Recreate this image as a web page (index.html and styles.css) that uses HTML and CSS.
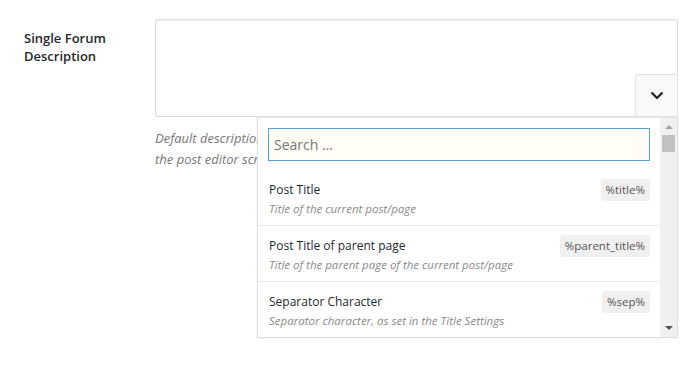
FILE: index.html
```html
<!DOCTYPE html>
<html lang="en">
<head>
    <meta charset="UTF-8">
    <meta name="viewport" content="width=device-width, initial-scale=1.0">
    <title>Single Forum Description</title>
    <link rel="stylesheet" href="styles.css">
</head>
<body>
    <div class="form-row">
        <div class="field-label">Single Forum Description</div>

        <div class="field">
            <div class="editor-wrap">
                <textarea class="editor"></textarea>

                <button class="toggle" type="button" aria-label="Insert variable">
                    <svg width="14" height="9" viewBox="0 0 14 9">
                        <polyline points="1.5,1.5 7,7 12.5,1.5" fill="none" stroke="#1d2327" stroke-width="2.2"/>
                    </svg>
                </button>

                <!-- variables dropdown, opened over the help text -->
                <div class="dropdown">
                    <div class="dropdown-list">
                        <div class="search-box">
                            <input class="search" type="text" placeholder="Search ...">
                        </div>

                        <div class="item">
                            <div class="item-text">
                                <div class="item-title">Post Title</div>
                                <div class="item-desc">Title of the current post/page</div>
                            </div>
                            <span class="tag">%title%</span>
                        </div>

                        <div class="item">
                            <div class="item-text">
                                <div class="item-title">Post Title of parent page</div>
                                <div class="item-desc">Title of the parent page of the current post/page</div>
                            </div>
                            <span class="tag">%parent_title%</span>
                        </div>

                        <div class="item">
                            <div class="item-text">
                                <div class="item-title">Separator Character</div>
                                <div class="item-desc">Separator character, as set in the Title Settings</div>
                            </div>
                            <span class="tag">%sep%</span>
                        </div>
                    </div>

                    <div class="scrollbar">
                        <span class="arrow arrow-up"></span>
                        <span class="thumb"></span>
                        <span class="track"></span>
                        <span class="arrow arrow-down"></span>
                    </div>
                </div>
            </div>

            <p class="help">Default description for single forum pages, used when no excerpt is given in<br>the post editor screen of the forum.</p>
        </div>
    </div>
</body>
</html>
```

FILE: styles.css
```css
html,
body {
    min-height: 365px;
}

body {
    margin: 0;
    background: #fff;
    font-family: 'Open Sans', 'Noto Sans', sans-serif;
    color: #23282d;
}

.form-row {
    display: grid;
    grid-template-columns: 131px 523px;
    padding: 19px 0 0 24px;
}

.field-label {
    padding-top: 10px;
    font-size: 13px;
    font-weight: 600;
    line-height: 18px;
    width: 100px;
}

.editor-wrap {
    position: relative;
}

.editor {
    display: block;
    box-sizing: border-box;
    width: 100%;
    height: 98px;
    margin: 0;
    border: 1px solid #dedede;
    border-radius: 2px;
    box-shadow: inset 0 1px 2px rgba(0, 0, 0, 0.06);
    background: #fff;
    resize: none;
}

.toggle {
    position: absolute;
    right: 0;
    bottom: 0;
    width: 43px;
    height: 43px;
    padding: 0;
    border: 1px solid #e2e2e2;
    border-radius: 2px 0 0 0;
    background: #f9f9f9;
    display: flex;
    align-items: center;
    justify-content: center;
    cursor: pointer;
}

.dropdown {
    position: absolute;
    top: 98px;
    left: 102px;
    width: 421px;
    height: 221px;
    box-sizing: border-box;
    display: flex;
    background: #fff;
    border: 1px solid #dedede;
    border-top-color: #e6e6e6;
    box-shadow: 0 1px 2px rgba(0, 0, 0, 0.05);
    z-index: 2;
}

.dropdown-list {
    flex: 1;
    overflow: hidden;
}

.search-box {
    padding: 10px 10px 9px;
}

.search {
    display: block;
    box-sizing: border-box;
    width: 100%;
    height: 33px;
    margin: 0;
    padding: 0 5px;
    border: 1px solid #5b9dd9;
    background: #fffdf5;
    font-family: inherit;
    font-size: 14px;
    color: #23282d;
    outline: none;
}

.search::placeholder {
    color: #72777c;
}

.item {
    display: flex;
    justify-content: space-between;
    align-items: flex-start;
    padding: 11px 10px 7px 11px;
    border-bottom: 1px solid #e8e8e8;
}

.item-title {
    font-size: 12px;
    line-height: 18px;
    color: #23282d;
}

.item-desc {
    font-size: 11.5px;
    font-style: italic;
    line-height: 19px;
    color: #8a8a8a;
}

.tag {
    margin-top: -2px;
    padding: 0 5px;
    height: 22px;
    line-height: 22px;
    border-radius: 3px;
    background: #f0f0f0;
    font-size: 11.5px;
    color: #555;
}

.scrollbar {
    width: 17px;
    display: flex;
    flex-direction: column;
    align-items: center;
    background: #f0f0f0;
}

.arrow {
    width: 0;
    height: 0;
    border-left: 4px solid transparent;
    border-right: 4px solid transparent;
}

.arrow-up {
    margin: 7px 0 6px;
    border-bottom: 4px solid #a3a3a3;
}

.arrow-down {
    margin: 6px 0 7px;
    border-top: 4px solid #505050;
}

.thumb {
    width: 13px;
    height: 17px;
    background: #c1c1c1;
}

.track {
    flex: 1;
}

.help {
    margin: 11px 0 0;
    font-size: 13px;
    font-style: italic;
    line-height: 21px;
    color: #777;
}
```
